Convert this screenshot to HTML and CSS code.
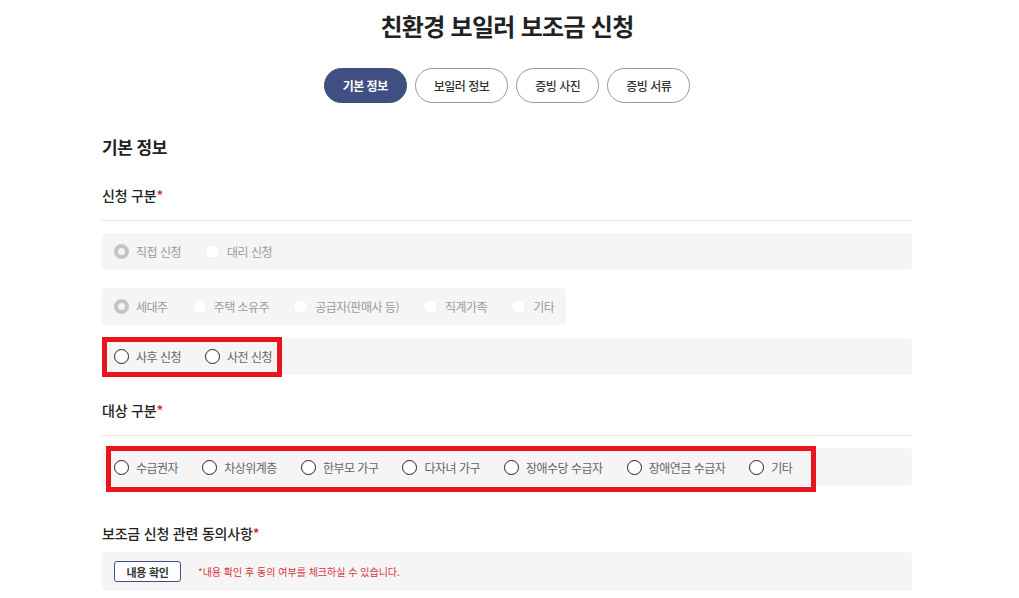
FILE: index.html
```html
<html lang="ko">
  <head>
    <meta charset="UTF-8" />
    <meta name="viewport" content="width=device-width, initial-scale=1.0" />
    <title>친환경 보일러 보조금 신청</title>
    <link rel="stylesheet" href="styles.css">
  </head>
  <body>
    <div class="container">
      <h1 class="page-title">친환경 보일러 보조금 신청</h1>

      <div class="tabs">
        <button class="tab active">기본 정보</button>
        <button class="tab">보일러 정보</button>
        <button class="tab">증빙 사진</button>
        <button class="tab">증빙 서류</button>
      </div>

      <h2 class="section-title">기본 정보</h2>

      <h3 class="field-title line">신청 구분<span class="req">*</span></h3>

      <div class="radio-box box-1">
        <label class="radio disabled"><input type="radio" name="apply" checked disabled /><span>직접 신청</span></label>
        <label class="radio disabled"><input type="radio" name="apply" disabled /><span>대리 신청</span></label>
      </div>

      <div class="radio-box inline box-2">
        <label class="radio disabled"><input type="radio" name="rel" checked disabled /><span>세대주</span></label>
        <label class="radio disabled"><input type="radio" name="rel" disabled /><span>주택 소유주</span></label>
        <label class="radio disabled"><input type="radio" name="rel" disabled /><span>공급자(판매사 등)</span></label>
        <label class="radio disabled"><input type="radio" name="rel" disabled /><span>직계가족</span></label>
        <label class="radio disabled"><input type="radio" name="rel" disabled /><span>기타</span></label>
      </div>

      <div class="radio-box box-3">
        <div class="radio-group mark mark-1">
          <label class="radio"><input type="radio" name="when" /><span>사후 신청</span></label>
          <label class="radio"><input type="radio" name="when" /><span>사전 신청</span></label>
        </div>
      </div>

      <h3 class="field-title line target">대상 구분<span class="req">*</span></h3>

      <div class="radio-box box-4">
        <div class="radio-group mark mark-2">
          <label class="radio"><input type="radio" name="target" /><span>수급권자</span></label>
          <label class="radio"><input type="radio" name="target" /><span>차상위계층</span></label>
          <label class="radio"><input type="radio" name="target" /><span>한부모 가구</span></label>
          <label class="radio"><input type="radio" name="target" /><span>다자녀 가구</span></label>
          <label class="radio"><input type="radio" name="target" /><span>장애수당 수급자</span></label>
          <label class="radio"><input type="radio" name="target" /><span>장애연금 수급자</span></label>
          <label class="radio"><input type="radio" name="target" /><span>기타</span></label>
        </div>
      </div>

      <h3 class="field-title agree">보조금 신청 관련 동의사항<span class="req">*</span></h3>

      <div class="radio-box box-5">
        <button class="btn-check">내용 확인</button>
        <p class="notice">*내용 확인 후 동의 여부를 체크하실 수 있습니다.</p>
      </div>
    </div>
  </body>
</html>
```

FILE: styles.css
```css
* {
  box-sizing: border-box;
}
body {
  margin: 0;
  font-family: "Noto Sans CJK KR", "Noto Sans", sans-serif;
  color: #222;
  background: #fff;
}
.container {
  width: 815px;
  padding-right: 5px;
  margin: 0 auto;
  padding-top: 10px;
}
.page-title {
  margin: 0;
  text-align: center;
  font-size: 24px;
  line-height: 32px;
  font-weight: 700;
  letter-spacing: -0.7px;
  color: #222;
}
.tabs {
  display: flex;
  justify-content: center;
  gap: 8px;
  margin-top: 26px;
}
.tab {
  height: 35px;
  padding: 0 18px;
  border: 1px solid #999;
  border-radius: 18px;
  background: #fff;
  font-family: inherit;
  font-size: 12px;
  font-weight: 500;
  letter-spacing: -0.5px;
  color: #333;
}
.tab.active {
  background: #404f82;
  border-color: #404f82;
  color: #fff;
  font-weight: 700;
}
.section-title {
  margin: 32px 0 0;
  font-size: 17px;
  line-height: 24px;
  font-weight: 700;
  letter-spacing: -0.5px;
  color: #222;
}
.field-title {
  margin: 26px 0 0;
  font-size: 14px;
  line-height: 20px;
  font-weight: 500;
  letter-spacing: -0.2px;
  color: #222;
}
.field-title.line {
  padding-bottom: 15px;
  border-bottom: 1px solid #e6e6e6;
}
.field-title.target {
  margin-top: 25px;
}
.field-title.agree {
  margin-top: 37px;
}
.req {
  color: #d3262c;
}
.radio-box {
  display: flex;
  align-items: center;
  gap: 24px;
  height: 37px;
  padding: 0 12px;
  background: #f5f5f5;
  border-radius: 4px;
}
.radio-box.inline {
  display: inline-flex;
}
.box-1 {
  margin-top: 12px;
}
.box-2 {
  margin-top: 18px;
}
.box-3 {
  margin-top: 13px;
  padding-left: 5px;
}
.box-4 {
  margin-top: 12px;
  height: 38px;
  padding-left: 9px;
  align-items: flex-start;
}
.box-5 {
  margin-top: 9px;
  height: 39px;
  gap: 17px;
}
.radio-group {
  display: flex;
  align-items: center;
  gap: 24px;
}
.mark {
  outline: 5px solid #e8151e;
}
.mark-1 {
  height: 30px;
  padding: 0 5px 0 7px;
}
.mark-2 {
  width: 700px;
  height: 36px;
  margin-top: 3px;
  padding: 0 3px 4px 3px;
}
.radio {
  display: flex;
  align-items: center;
  gap: 7px;
  font-size: 12px;
  letter-spacing: -0.5px;
  color: #666;
  white-space: nowrap;
}
.radio.disabled {
  color: #9b9b9b;
}
.radio input {
  appearance: none;
  -webkit-appearance: none;
  margin: 0;
  width: 15px;
  height: 15px;
  border: 1.3px solid #222;
  border-radius: 50%;
  background: #fff;
}
.radio input:disabled {
  border: 1px solid #eee;
}
.radio input:disabled:checked {
  border: 4px solid #c4c4c4;
  background: #f4f4f4;
}
.btn-check {
  width: 67px;
  height: 21px;
  padding: 0;
  border: 1px solid #404f82;
  border-radius: 3px;
  background: #fff;
  font-family: inherit;
  font-size: 11px;
  font-weight: 700;
  letter-spacing: -0.3px;
  color: #333;
}
.notice {
  margin: 0;
  font-size: 10px;
  color: #d4363b;
}
```
